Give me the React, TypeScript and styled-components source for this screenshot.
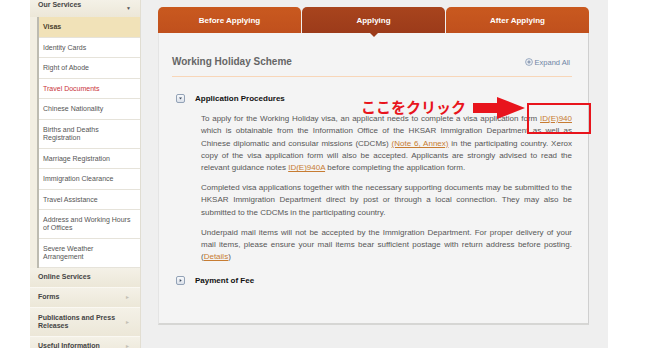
import React from 'react';
import styled, { createGlobalStyle } from 'styled-components';

const GlobalStyle = createGlobalStyle`
  html, body {
    margin: 0;
    padding: 0;
    background: #ffffff;
    font-family: "Liberation Sans", Arial, sans-serif;
  }
`;

const Page = styled.div`
  display: flex;
  height: 348px;
  overflow: hidden;
  padding-left: 30px;
`;

const Frame = styled.div`
  position: relative;
  display: flex;
  width: 578px;
  height: 348px;
  background: #efefef;
`;

const Sidebar = styled.nav`
  width: 110px;
  flex-shrink: 0;
  background: #f2eee2;
  box-shadow: 1px 0 0 #e2ded2;
`;

const MenuHead = styled.div<{ $tall?: boolean }>`
  position: relative;
  display: flex;
  align-items: center;
  min-height: ${(p) => (p.$tall ? '28px' : '19px')};
  padding: 0 18px 0 8px;
  font-size: 7px;
  line-height: 8px;
  font-weight: bold;
  color: #444;
  background: linear-gradient(#f4f1e7, #ece7d8);
  border-bottom: 1px solid #faf8f2;
`;

const OpenHead = styled(MenuHead)`
  min-height: 17px;
  align-items: flex-start;
  padding-top: 1px;
  box-sizing: border-box;
  border-bottom: none;
`;

const Caret = styled.span<{ $open?: boolean }>`
  position: absolute;
  right: ${(p) => (p.$open ? '9px' : '10px')};
  top: ${(p) => (p.$open ? '4px' : '50%')};
  transform: ${(p) => (p.$open ? 'none' : 'translateY(-50%)')};
  font-size: 5px;
  color: ${(p) => (p.$open ? '#555' : '#c4c0b4')};
`;

const SubMenu = styled.ul`
  list-style: none;
  margin: 0 0 0 7px;
  padding: 0;
  border-left: 2px solid #bdbbb1;
  box-shadow: 1px 0 0 #e0ddd2;
`;

const SubItem = styled.li<{ $active?: boolean; $current?: boolean }>`
  padding: 6px 6px 5.6px 4px;
  font-size: 7px;
  line-height: 8px;
  font-weight: ${(p) => (p.$active ? 'bold' : 'normal')};
  color: ${(p) => (p.$active ? '#4a3f2c' : p.$current ? '#c9343a' : '#555')};
  background: ${(p) => (p.$active ? '#f1e2b8' : '#ffffff')};
  border-bottom: 1px solid #e6e3da;
`;

const Content = styled.main`
  flex: 1;
  padding: 7px 19px 0 18px;
`;

const Panel = styled.section`
  width: 431px;
`;

const Tabs = styled.div`
  display: flex;
  height: 26px;
`;

const Tab = styled.div<{ $active?: boolean }>`
  position: relative;
  flex: 1;
  display: flex;
  align-items: center;
  justify-content: center;
  font-size: 8px;
  font-weight: bold;
  color: #fff;
  background: ${(p) => (p.$active ? 'linear-gradient(#a8441d, #9c3b1a)' : 'linear-gradient(#c9591f, #c0501d)')};
  border-radius: 5px 5px 0 0;
  & + & {
    margin-left: 1px;
  }
  &::after {
    content: '';
    display: ${(p) => (p.$active ? 'block' : 'none')};
    position: absolute;
    left: 50%;
    bottom: -4px;
    margin-left: -4px;
    border-left: 4px solid transparent;
    border-right: 4px solid transparent;
    border-top: 4px solid #9c3b1a;
  }
`;

const Body = styled.div`
  height: 292px;
  box-sizing: border-box;
  padding: 22px 16px 0 13px;
  background: #f4f4f4;
  border-left: 1px solid #e4e4e4;
  border-right: 1px solid #cfcfcf;
  border-bottom: 2px solid #d6d6d4;
`;

const TitleRow = styled.div`
  display: flex;
  align-items: center;
  justify-content: space-between;
  padding-bottom: 7px;
  border-bottom: 1px solid #f8d6b8;
`;

const Title = styled.h2`
  margin: 0;
  font-size: 10px;
  line-height: 14px;
  font-weight: bold;
  color: #666;
`;

const ExpandAll = styled.span`
  display: flex;
  align-items: center;
  gap: 2px;
  margin-right: 2px;
  font-size: 7.5px;
  color: #6f86a6;
`;

const Section = styled.div<{ $gap: number }>`
  margin-top: ${(p) => p.$gap}px;
`;

const SectionHead = styled.div`
  display: flex;
  align-items: center;
  height: 10px;
  padding-left: 4px;
  gap: 10px;
  font-size: 8px;
  font-weight: bold;
  color: #111;
`;

const Paras = styled.div`
  margin: 10px 0 0 29px;
`;

const Para = styled.p`
  margin: 0 0 7.6px;
  font-size: 8px;
  line-height: 12.3px;
  color: #575757;
  text-align: justify;
`;

const A = styled.a`
  color: #c77c32;
  text-decoration: underline;
`;

const Note = styled.div`
  position: absolute;
  left: 331px;
  top: 97px;
  font-family: "Noto Sans CJK JP", sans-serif;
  font-size: 15px;
  line-height: 20px;
  font-weight: bold;
  color: #e8141c;
`;

const Arrow = styled.svg`
  position: absolute;
  left: 443px;
  top: 96px;
`;

const Box = styled.div`
  position: absolute;
  left: 497px;
  top: 103px;
  width: 64px;
  height: 31px;
  box-sizing: border-box;
  border: 2px solid #e8141c;
`;

const Toggle = ({ open }: { open?: boolean }) => (
  <svg width="9" height="9" viewBox="0 0 9 9">
    <defs>
      <linearGradient id={open ? 'tg1' : 'tg2'} x1="0" y1="0" x2="0" y2="1">
        <stop offset="0" stopColor="#fafbfd" />
        <stop offset="1" stopColor="#d9dfe8" />
      </linearGradient>
    </defs>
    <rect x="0.5" y="0.5" width="8" height="8" rx="1.5" fill={`url(#${open ? 'tg1' : 'tg2'})`} stroke="#93a2b6" />
    {open ? <path d="M3 3.5h3L4.5 5.5z" fill="#3f4d60" /> : <path d="M3.7 3v3l2-1.5z" fill="#3f4d60" />}
  </svg>
);

const PlusCircle = () => (
  <svg width="8" height="8" viewBox="0 0 8 8">
    <circle cx="4" cy="4" r="3.4" fill="#eef1f5" stroke="#8497b2" strokeWidth="0.8" />
    <path d="M2.3 4h3.4M4 2.3v3.4" stroke="#5f7394" strokeWidth="0.8" />
  </svg>
);

const subItems = [
  'Identity Cards',
  'Right of Abode',
  'Travel Documents',
  'Chinese Nationality',
  'Births and Deaths Registration',
  'Marriage Registration',
  'Immigration Clearance',
  'Travel Assistance',
  'Address and Working Hours of Offices',
  'Severe Weather Arrangement',
];

export default function App() {
  return (
    <Page>
      <GlobalStyle />
      <Frame>
        <Sidebar>
          <OpenHead>
            Our Services
            <Caret $open>▼</Caret>
          </OpenHead>
          <SubMenu>
            <SubItem $active>Visas</SubItem>
            {subItems.map((s) => (
              <SubItem key={s} $current={s === 'Travel Documents'}>
                {s}
              </SubItem>
            ))}
          </SubMenu>
          <MenuHead>Online Services</MenuHead>
          <MenuHead>
            Forms
            <Caret>►</Caret>
          </MenuHead>
          <MenuHead $tall>
            Publications and Press Releases
            <Caret>►</Caret>
          </MenuHead>
          <MenuHead>
            Useful Information
            <Caret>►</Caret>
          </MenuHead>
        </Sidebar>

        <Content>
          <Panel>
            <Tabs>
              <Tab>Before Applying</Tab>
              <Tab $active>Applying</Tab>
              <Tab>After Applying</Tab>
            </Tabs>
            <Body>
              <TitleRow>
                <Title>Working Holiday Scheme</Title>
                <ExpandAll>
                  <PlusCircle />
                  Expand All
                </ExpandAll>
              </TitleRow>

              <Section $gap={16}>
                <SectionHead>
                  <Toggle open />
                  Application Procedures
                </SectionHead>
                <Paras>
                  <Para>
                    To apply for the Working Holiday visa, an applicant needs to complete a visa application form{' '}
                    <A>ID(E)940</A> which is obtainable from the Information Office of the HKSAR Immigration Department as
                    well as Chinese diplomatic and consular missions (CDCMs) <A>(Note 6, Annex)</A> in the participating
                    country. Xerox copy of the visa application form will also be accepted. Applicants are strongly advised
                    to read the relevant guidance notes <A>ID(E)940A</A> before completing the application form.
                  </Para>
                  <Para>
                    Completed visa applications together with the necessary supporting documents may be submitted to the
                    HKSAR Immigration Department direct by post or through a local connection. They may also be submitted
                    to the CDCMs in the participating country.
                  </Para>
                  <Para>
                    Underpaid mail items will not be accepted by the Immigration Department. For proper delivery of your
                    mail items, please ensure your mail items bear sufficient postage with return address before posting.
                    (<A>Details</A>)
                  </Para>
                </Paras>
              </Section>

              <Section $gap={12}>
                <SectionHead>
                  <Toggle />
                  Payment of Fee
                </SectionHead>
              </Section>
            </Body>
          </Panel>
        </Content>

        <Note>ここをクリック</Note>
        <Arrow width="52" height="24" viewBox="0 0 52 24">
          <path d="M0 7h24V1l28 11-28 11v-6H0z" fill="#e8141c" />
        </Arrow>
        <Box />
      </Frame>
    </Page>
  );
}
